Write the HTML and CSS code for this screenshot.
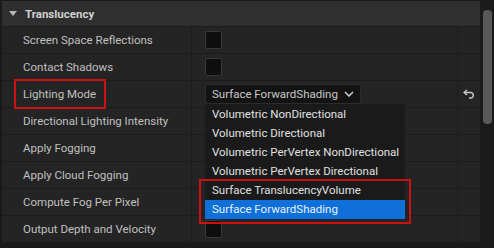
FILE: index.html
```html
<!DOCTYPE html>
<html lang="en">
<head>
    <meta charset="UTF-8">
    <meta name="viewport" content="width=device-width, initial-scale=1.0">
    <title>Translucency</title>
    <link rel="stylesheet" href="styles.css">
</head>
<body>

<div class="panel">
    <div class="details">
        <div class="category">
            <span class="arrow"></span>
            <span class="category-name">Translucency</span>
        </div>
        <div class="row">
            <div class="name">Screen Space Reflections</div>
            <div class="value"><span class="checkbox"></span></div>
            <div class="reset"></div>
        </div>
        <div class="row">
            <div class="name">Contact Shadows</div>
            <div class="value"><span class="checkbox"></span></div>
            <div class="reset"></div>
        </div>
        <div class="row">
            <div class="name"><span class="marked">Lighting Mode</span></div>
            <div class="value">
                <div class="combo">
                    <span>Surface ForwardShading</span>
                    <svg class="chevron" width="10" height="6" viewBox="0 0 10 6"><path d="M1 1 L5 5 L9 1" fill="none" stroke="#d0d0d0" stroke-width="1.5"/></svg>
                </div>
                <div class="menu">
                    <div class="item">Volumetric NonDirectional</div>
                    <div class="item">Volumetric Directional</div>
                    <div class="item">Volumetric PerVertex NonDirectional</div>
                    <div class="item">Volumetric PerVertex Directional</div>
                    <div class="item">Surface TranslucencyVolume</div>
                    <div class="item selected">Surface ForwardShading</div>
                    <div class="menu-mark"></div>
                </div>
            </div>
            <div class="reset">
                <svg width="12" height="10" viewBox="0 0 12 10"><path d="M4 1 L1 3.5 L4 6 M1.5 3.5 H8 A2.8 2.8 0 0 1 8 9 H6" fill="none" stroke="#c8c8c8" stroke-width="1.4"/></svg>
            </div>
        </div>
        <div class="row">
            <div class="name">Directional Lighting Intensity</div>
            <div class="value"></div>
            <div class="reset"></div>
        </div>
        <div class="row">
            <div class="name">Apply Fogging</div>
            <div class="value"></div>
            <div class="reset"></div>
        </div>
        <div class="row">
            <div class="name">Apply Cloud Fogging</div>
            <div class="value"></div>
            <div class="reset"></div>
        </div>
        <div class="row">
            <div class="name">Compute Fog Per Pixel</div>
            <div class="value"></div>
            <div class="reset"></div>
        </div>
        <div class="row">
            <div class="name">Output Depth and Velocity</div>
            <div class="value"><span class="checkbox"></span></div>
            <div class="reset"></div>
        </div>
    </div>
    <div class="scrollbar"><div class="thumb"></div></div>
</div>

</body>
</html>
```

FILE: styles.css
```css
body {
    margin: 0;
    background-color: #1a1a1a;
    font-family: Roboto, "Noto Sans", sans-serif;
    font-size: 11.5px;
    color: #c0c0c0;
}
.panel {
    display: flex;
    height: 248px;
    padding-top: 1px;
    box-sizing: border-box;
}
.details {
    width: 478px;
    margin-left: 2px;
    background-color: #242424;
    align-self: flex-start;
}
.category {
    height: 25px;
    background-color: #2f2f2f;
    border-bottom: 1px solid #1c1c1c;
    display: flex;
    align-items: center;
}
.arrow {
    width: 0;
    height: 0;
    margin-left: 7px;
    margin-right: 8px;
    border-left: 4px solid transparent;
    border-right: 4px solid transparent;
    border-top: 5px solid #b8b8b8;
}
.category-name {
    font-weight: bold;
    color: #d0d0d0;
}
.row {
    display: grid;
    grid-template-columns: 190px 266px 22px;
    height: 26px;
    border-bottom: 1px solid #1c1c1c;
}
.name {
    display: flex;
    align-items: center;
    padding-left: 21px;
    border-right: 1px solid #1c1c1c;
}
.marked {
    outline: 2px solid #cc1111;
    padding: 6px 8px 6px 7px;
    margin-left: -7px;
}
.value {
    position: relative;
    display: flex;
    align-items: center;
    padding-left: 13px;
    border-right: 1px solid #1c1c1c;
}
.checkbox {
    width: 15px;
    height: 16px;
    background-color: #0f0f0f;
    border: 1px solid #383838;
    border-radius: 2px;
}
.combo {
    width: 156px;
    height: 20px;
    box-sizing: border-box;
    background-color: #131313;
    border: 1px solid #2c2c2c;
    border-radius: 3px;
    display: flex;
    align-items: center;
    padding-left: 6px;
    gap: 6px;
    color: #c8c8c8;
}
.reset {
    display: flex;
    align-items: center;
    justify-content: center;
}
.menu {
    position: absolute;
    left: 13px;
    top: 23px;
    width: 200px;
    padding-top: 1px;
    background-color: #1a1a1a;
    z-index: 2;
}
.item {
    height: 19px;
    line-height: 19px;
    padding-left: 7px;
    color: #e0e0e0;
}
.item.selected {
    background-color: #0e70d8;
    color: #e8f0ff;
}
.menu-mark {
    position: absolute;
    left: -6px;
    top: 75px;
    width: 208px;
    height: 41px;
    border: 2px solid #cc1111;
}
.scrollbar {
    margin-left: 3px;
    width: 9px;
    padding-top: 9px;
}
.thumb {
    height: 114px;
    background-color: #585858;
    border-radius: 4px;
}
```
